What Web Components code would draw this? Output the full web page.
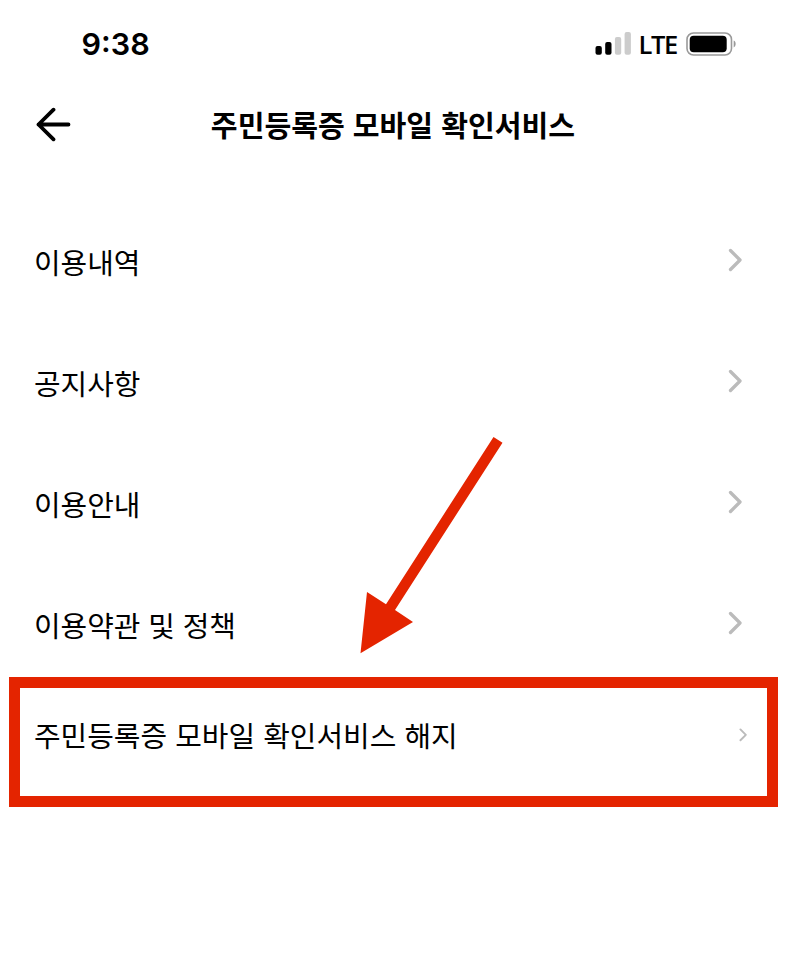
<!DOCTYPE html>
<html lang="ko">
<head>
<meta charset="utf-8">
<title>주민등록증 모바일 확인서비스</title>
<style>
  body {
    margin: 0;
    background: #fff;
    color: #000;
    font-family: "Noto Sans CJK KR", sans-serif;
  }
</style>
</head>
<body>
<service-screen>
  <status-bar slot="status" time="9:38" network="LTE"></status-bar>
  <title-bar slot="title">주민등록증 모바일 확인서비스</title-bar>
  <menu-row>이용내역</menu-row>
  <menu-row>공지사항</menu-row>
  <menu-row>이용안내</menu-row>
  <menu-row>이용약관 및 정책</menu-row>
  <highlight-box slot="marked">
    <menu-row small>주민등록증 모바일 확인서비스 해지</menu-row>
  </highlight-box>
  <pointer-arrow slot="marked"></pointer-arrow>
</service-screen>

<script>
/**
 * Defines a custom element that only consists of a template.
 *
 * @param {string} name Tag name.
 * @param {string} html Content of the shadow root.
 */
function defineElement (name, html) {
  const template = document.createElement('template')
  template.innerHTML = html

  customElements.define(name,
    class extends HTMLElement {
      constructor () {
        super()
        this.attachShadow({ mode: 'open' })
        this.shadowRoot.appendChild(template.content.cloneNode(true))
      }

      /**
       * Copies the attributes to the elements that show them.
       */
      connectedCallback () {
        this.shadowRoot.querySelectorAll('[data-attr]').forEach(element => {
          element.textContent = this.getAttribute(element.dataset.attr)
        })
      }
    }
  )
}

defineElement('service-screen', `
  <style>
    :host {
      display: flex;
      flex-direction: column;
      position: relative;
      box-sizing: border-box;
      height: 960px;
      overflow: hidden;
    }
    nav {
      display: flex;
      flex-direction: column;
      gap: 81px;
      padding: 79px 44px 31px 34px;
    }
  </style>
  <slot name="status"></slot>
  <slot name="title"></slot>
  <nav><slot></slot></nav>
  <slot name="marked"></slot>
`)

defineElement('status-bar', `
  <style>
    :host {
      display: flex;
      justify-content: space-between;
      align-items: center;
      height: 88px;
      padding: 0 49px 0 81.5px;
    }
    .time {
      font: 600 30.5px/32px Inter, sans-serif;
    }
    .right {
      display: flex;
      align-items: center;
    }
    .network {
      margin: 0 9px 1px 7px;
      font: 600 25.5px/30px "Open Sans", sans-serif;
      letter-spacing: -1.3px;
    }
    svg {
      display: block;
    }
  </style>
  <span class="time" data-attr="time"></span>
  <div class="right">
    <svg width="36" height="24" viewBox="0 0 36 24">
      <rect x="0.5" y="14" width="6.3" height="8.7" rx="2"/>
      <rect x="10.2" y="10" width="6.3" height="12.7" rx="2"/>
      <g fill="#ccc">
        <rect x="19.9" y="5" width="6.3" height="17.7" rx="2"/>
        <rect x="29.6" y="0" width="6.3" height="22.7" rx="2"/>
      </g>
    </svg>
    <span class="network" data-attr="network"></span>
    <svg width="51" height="24" viewBox="0 0 51 24">
      <rect x="1" y="1" width="44.5" height="22" rx="6.5" fill="none" stroke="#999" stroke-width="1.6"/>
      <rect x="3.7" y="3.7" width="37" height="16.6" rx="4"/>
      <path d="M47.7 8.6v6.8c2.6-1.1 2.6-5.7 0-6.8z" fill="#999"/>
    </svg>
  </div>
`)

defineElement('title-bar', `
  <style>
    :host {
      display: grid;
      grid-template-columns: 1fr auto 1fr;
      align-items: center;
      height: 76px;
      padding: 0 36px;
    }
    svg {
      display: block;
      margin-bottom: 2px;
    }
    h1 {
      margin: 0 0 4px;
      font-size: 29.1px;
      line-height: 40px;
      font-weight: 700;
    }
  </style>
  <svg width="36" height="36" viewBox="0 0 36 36" fill="none" stroke="#000" stroke-width="3.8" stroke-linecap="round" stroke-linejoin="round">
    <path d="M32.5 17.5H2.5M17.5 2.7L2.5 17.5L17.5 32.3"/>
  </svg>
  <h1><slot></slot></h1>
`)

defineElement('menu-row', `
  <style>
    :host {
      display: flex;
      justify-content: space-between;
      align-items: center;
      height: 40px;
      font-size: 28.95px;
      line-height: 40px;
    }
    span {
      margin-bottom: 5px;
      word-spacing: -0.3px;
    }
    svg {
      display: block;
      width: 14px;
      height: 24px;
      margin-bottom: 7px;
      fill: none;
      stroke: #bbb;
      stroke-width: 3.3;
      stroke-linecap: round;
      stroke-linejoin: round;
    }
    :host([small]) span {
      margin-bottom: 6px;
      word-spacing: 0;
    }
    :host([small]) svg {
      width: 8px;
      height: 13.7px;
      margin-bottom: 4px;
      stroke-width: 3.3;
    }
  </style>
  <span><slot></slot></span>
  <svg viewBox="0 0 14 24"><path d="M2.5 2.5L12 12L2.5 21.5"/></svg>
`)

defineElement('highlight-box', `
  <style>
    :host {
      display: block;
      box-sizing: border-box;
      height: 130px;
      margin: 0 8px 0 9px;
      padding: 29px 20px 0 14px;
      border: 11px solid #e42400;
    }
  </style>
  <slot></slot>
`)

// The arrow lies over the menu and points at the highlighted row.
defineElement('pointer-arrow', `
  <style>
    :host {
      position: absolute;
      left: 360px;
      top: 437px;
      width: 143px;
      height: 217px;
    }
    svg {
      display: block;
    }
  </style>
  <svg width="143" height="217" viewBox="0 0 143 217" fill="#e42400">
    <path d="M133.5 0L142.5 5.7L35 173L53 185L.5 216.3L7 155L26 167.3z"/>
  </svg>
`)
</script>
</body>
</html>
